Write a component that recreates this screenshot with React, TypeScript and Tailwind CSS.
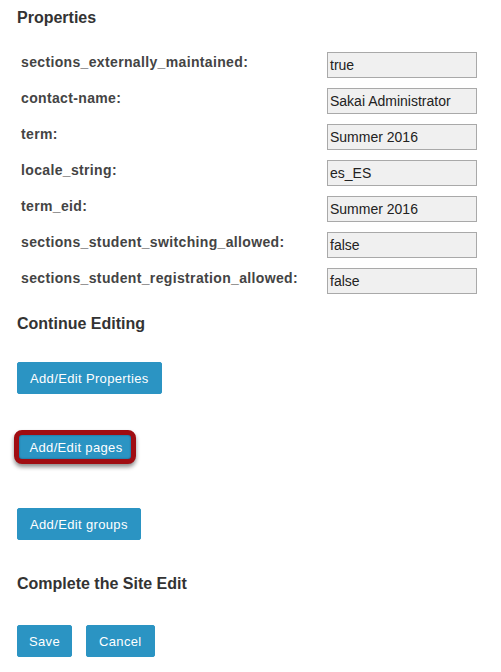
const properties: [string, string][] = [
  ['sections_externally_maintained:', 'true'],
  ['contact-name:', 'Sakai Administrator'],
  ['term:', 'Summer 2016'],
  ['locale_string:', 'es_ES'],
  ['term_eid:', 'Summer 2016'],
  ['sections_student_switching_allowed:', 'false'],
  ['sections_student_registration_allowed:', 'false'],
];

function SakaiButton({ label, pad = 'px-3' }: { label: string; pad?: string }) {
  return (
    <button className={`h-8 ${pad} border border-[#2b94c3] bg-[#2b94c3] rounded-[2px] text-white text-[13px] tracking-[0.35px] leading-none`}>
      {label}
    </button>
  );
}

export default function App() {
  return (
    <div className="w-[501px] h-[672px] bg-white pl-[17px] pt-[8px] font-['Liberation_Sans',Arial,sans-serif] text-[#333]">
      <h2 className="text-[16px] leading-[20px] font-bold">Properties</h2>

      {/* Property table */}
      <div className="mt-[24px] flex flex-col gap-[10px]">
        {properties.map(([name, value]) => (
          <div key={name} className="flex items-start h-[26px]">
            <div className="w-[310px] pl-[4px] pt-[2px] text-[14px] leading-[16px] font-bold tracking-[0.35px] text-[#444]">
              {name}
            </div>
            <div className="w-[150px] h-[26px] border border-[#a9a9a9] bg-[#f0f0f0] flex items-center pl-[2px] text-[14px] text-[#222]">
              {value}
            </div>
          </div>
        ))}
      </div>

      <h2 className="mt-[20px] text-[16px] leading-[20px] font-bold">Continue Editing</h2>

      <div className="mt-[28px] flex flex-col items-start">
        <SakaiButton label="Add/Edit Properties" />

        {/* Highlighted button */}
        <div className="mt-[36px] -ml-[3px] w-[122px] h-[34px] border-[5px] border-[#a00d12] rounded-[8px] shadow-[0_3px_4px_rgba(0,0,0,0.45)] bg-[#2b94c3] flex items-center justify-center">
          <div className="w-full h-full rounded-[3px] shadow-[inset_0_0_2px_rgba(0,40,80,0.6)] flex items-center justify-center">
            <span className="text-white text-[13px] tracking-[0.35px] leading-none pl-[2px]">Add/Edit pages</span>
          </div>
        </div>

        <div className="mt-[44px]">
          <SakaiButton label="Add/Edit groups" />
        </div>
      </div>

      <h2 className="mt-[34px] text-[16px] leading-[20px] font-bold">Complete the Site Edit</h2>

      <div className="mt-[31px] flex gap-[14px]">
        <SakaiButton label="Save" pad="px-[11px]" />
        <SakaiButton label="Cancel" />
      </div>
    </div>
  );
}
